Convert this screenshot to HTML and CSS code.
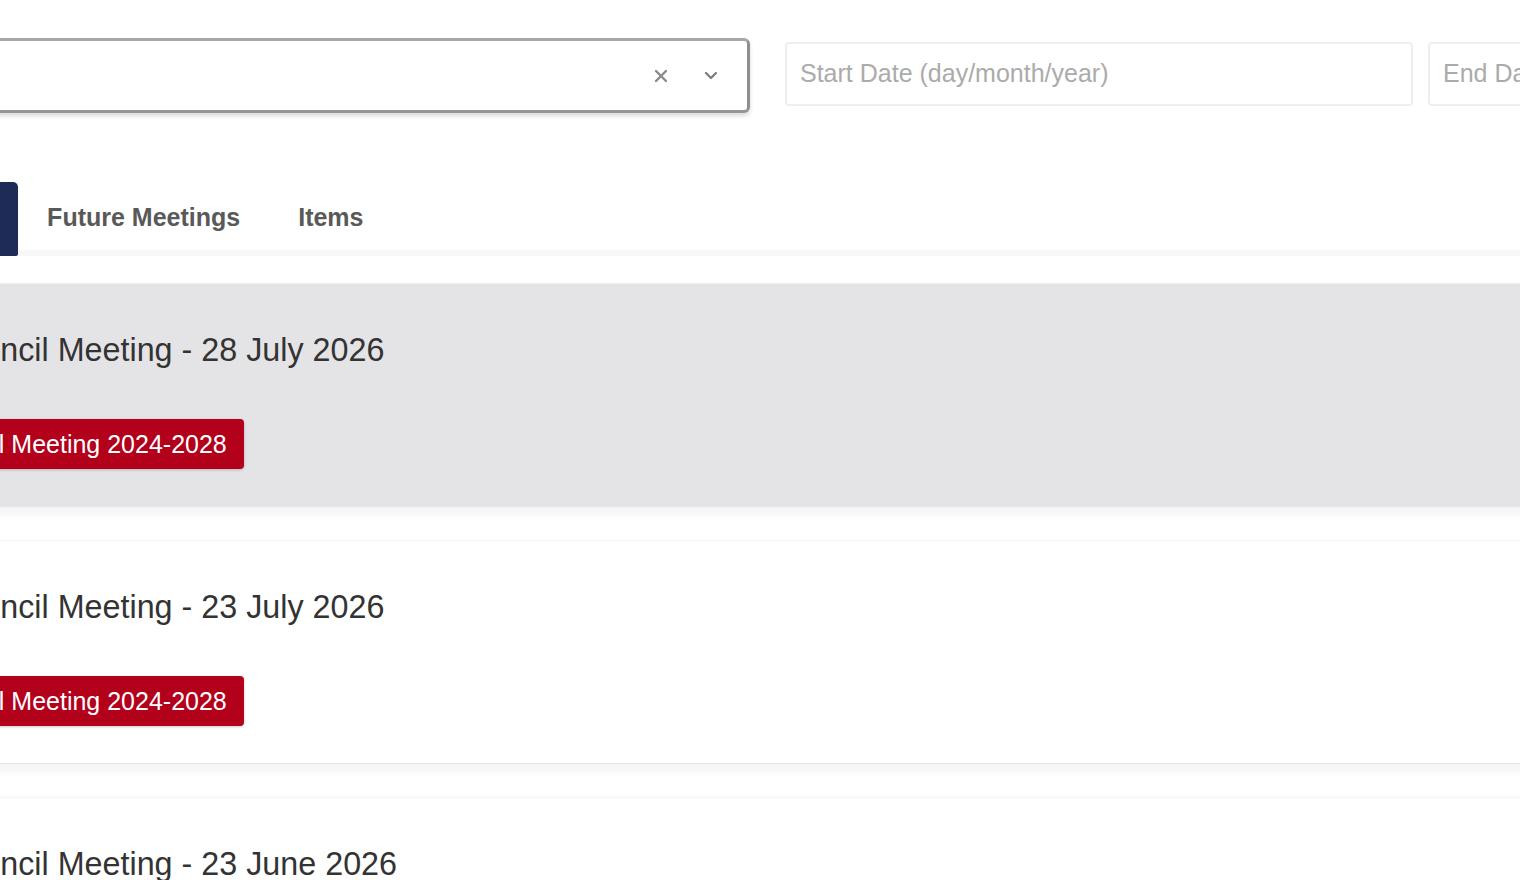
FILE: index.html
```html
<!DOCTYPE html>
<html lang="en">
<head>
    <meta charset="UTF-8">
    <meta name="viewport" content="width=device-width, initial-scale=1.0">
    <title>Meetings | Council</title>
    <link rel="stylesheet" href="styles.css">
</head>
<body>
    <div class="page">
        <div class="filters">
            <div class="select">
                <input class="select-input" type="text" aria-label="Committee">
                <span class="select-clear">
                    <svg width="14" height="14" viewBox="0 0 14 14"><path d="M2 2 L12 12 M12 2 L2 12" stroke="#8a8a8a" stroke-width="2.4" stroke-linecap="round"/></svg>
                </span>
                <span class="select-arrow">
                    <svg width="14" height="9" viewBox="0 0 14 9"><path d="M2 2 L7 7 L12 2" fill="none" stroke="#7a7a7a" stroke-width="2.2" stroke-linecap="round" stroke-linejoin="round"/></svg>
                </span>
            </div>
            <input class="date-input" type="text" placeholder="Start Date (day/month/year)">
            <input class="date-input" type="text" placeholder="End Date (day/month/year)">
        </div>

        <nav class="tabs">
            <a href="#" class="tab active">Past Meetings</a>
            <a href="#" class="tab">Future Meetings</a>
            <a href="#" class="tab">Items</a>
        </nav>

        <ul class="meetings">
            <li class="meeting highlighted">
                <div class="meeting-head">
                    <span class="meeting-icon"></span>
                    <a href="#" class="meeting-title">Council Meeting - 28 July 2026</a>
                </div>
                <span class="badge">Council Meeting 2024-2028</span>
            </li>
            <li class="meeting">
                <div class="meeting-head">
                    <span class="meeting-icon"></span>
                    <a href="#" class="meeting-title">Council Meeting - 23 July 2026</a>
                </div>
                <span class="badge">Council Meeting 2024-2028</span>
            </li>
            <li class="meeting">
                <div class="meeting-head">
                    <span class="meeting-icon"></span>
                    <a href="#" class="meeting-title">Council Meeting - 23 June 2026</a>
                </div>
                <span class="badge">Council Meeting 2024-2028</span>
            </li>
        </ul>
    </div>
</body>
</html>
```

FILE: styles.css
```css
* {
    margin: 0;
    padding: 0;
    box-sizing: border-box;
    font-family: 'Liberation Sans', Arial, sans-serif;
}

html, body {
    overflow: hidden;
    background: #fff;
}

.page {
    margin-left: -208px;
    padding-top: 38px;
    width: 2300px;
}

/* filter row */
.filters {
    display: flex;
    align-items: flex-start;
    gap: 15px;
}

.select {
    flex: none;
    width: 958px;
    height: 75px;
    display: flex;
    align-items: center;
    border: 3px solid #a7a7a7;
    border-right-color: #8f8f8f;
    border-bottom-color: #959595;
    border-radius: 6px;
    box-shadow: 0 3px 4px rgba(0, 0, 0, 0.14);
    padding-right: 29px;
    margin-right: 20px;
    background: #fff;
}

.select-input {
    flex: 1;
    height: 100%;
    border: none;
    outline: none;
    background: transparent;
    font-size: 25px;
}

.select-clear,
.select-arrow {
    display: flex;
    align-items: center;
}

.select-arrow {
    margin-left: 36px;
}

.date-input {
    flex: none;
    width: 628px;
    height: 64px;
    margin-top: 4px;
    border: 2px solid #eeeeee;
    border-radius: 4px;
    padding: 0 13px 2px;
    font-size: 25px;
    color: #333;
    outline: none;
}

.date-input::placeholder {
    color: #ababab;
}

/* tabs */
.tabs {
    display: flex;
    margin-top: 69px;
    border-bottom: 6px solid #f7f7f7;
}

.tab {
    display: block;
    height: 68px;
    padding: 3px 29px 0;
    line-height: 65px;
    font-size: 25px;
    font-weight: bold;
    color: #595959;
    text-decoration: none;
}

.tab.active {
    height: 74px;
    margin-bottom: -6px;
    background: #1e2b56;
    color: #fff;
    border-radius: 5px 5px 2px 2px;
}

/* meeting list */
.meetings {
    list-style: none;
    margin-top: 27px;
}

.meeting {
    padding: 47px 112px 37px;
    margin-bottom: 33px;
    background: #fff;
    border-top: 1px solid #f4f4f4;
    border-bottom: 1px solid #e6e6e6;
    box-shadow: 0 5px 12px rgba(0, 0, 0, 0.06);
}

.meeting.highlighted {
    background: #e4e4e6;
    border-top-color: #efefef;
}

.meeting-head {
    display: flex;
    align-items: center;
    gap: 12px;
    margin-bottom: 50px;
}

.meeting-icon {
    width: 25px;
    height: 25px;
}

.meeting-title {
    font-size: 32.3px;
    line-height: 38px;
    color: #333;
    text-decoration: none;
}

.badge {
    display: inline-block;
    padding: 10px 17px;
    font-size: 25px;
    line-height: 30px;
    color: #fff;
    background: #b3001b;
    border-radius: 4px;
    box-shadow: 0 1px 3px rgba(0, 0, 0, 0.2);
}
```
